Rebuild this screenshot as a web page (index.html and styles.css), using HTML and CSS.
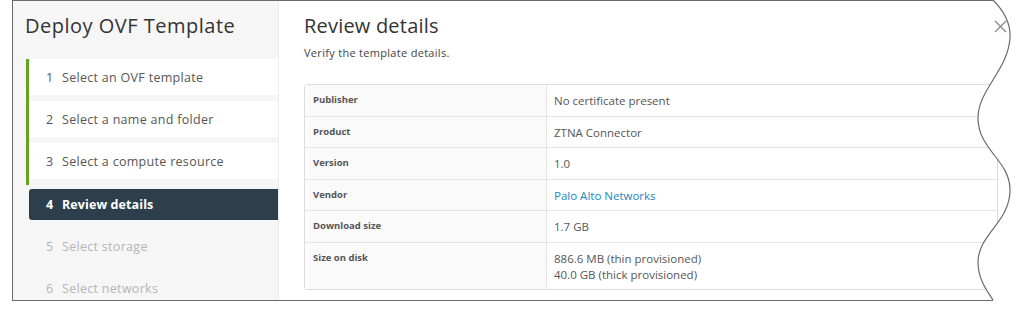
FILE: index.html
```html
<!DOCTYPE html>
<html lang="en">

<head>
    <meta charset="UTF-8">
    <title>Deploy OVF Template</title>
    <link rel="stylesheet" href="styles.css">
</head>

<body>
    <div class="page">
        <div class="wizard">
            <aside class="wizard-nav">
                <h2 class="wizard-title">Deploy OVF Template</h2>
                <ol class="steps">
                    <li class="step done"><span class="num">1</span>Select an OVF template</li>
                    <li class="step done"><span class="num">2</span>Select a name and folder</li>
                    <li class="step done"><span class="num">3</span>Select a compute resource</li>
                    <li class="step active"><span class="num">4</span>Review details</li>
                    <li class="step todo"><span class="num">5</span>Select storage</li>
                    <li class="step todo"><span class="num">6</span>Select networks</li>
                </ol>
            </aside>

            <main class="wizard-body">
                <h3 class="body-title">Review details</h3>
                <p class="body-sub">Verify the template details.</p>

                <table class="details">
                    <tr>
                        <th>Publisher</th>
                        <td>No certificate present</td>
                    </tr>
                    <tr>
                        <th>Product</th>
                        <td>ZTNA Connector</td>
                    </tr>
                    <tr>
                        <th>Version</th>
                        <td>1.0</td>
                    </tr>
                    <tr>
                        <th>Vendor</th>
                        <td><a href="#">Palo Alto Networks</a></td>
                    </tr>
                    <tr>
                        <th>Download size</th>
                        <td>1.7 GB</td>
                    </tr>
                    <tr>
                        <th>Size on disk</th>
                        <td>886.6 MB (thin provisioned)<br>40.0 GB (thick provisioned)</td>
                    </tr>
                </table>
            </main>

            <button class="close" type="button" aria-label="Close">
                <svg width="13" height="13" viewBox="0 0 13 13">
                    <path d="M1 1 L12 12 M12 1 L1 12" stroke="#8a8a8a" stroke-width="1.4" fill="none" />
                </svg>
            </button>
        </div>

        <!-- torn right edge of the screenshot -->
        <svg class="torn-edge" width="1024" height="325" viewBox="0 0 1024 325">
            <path d="M993,-2 L993,0 C1003,10 1011,22 1010,38 C1008,70 978,90 978,118 C978,150 1010,160 1010,190 C1010,222 978,235 978,262 C978,280 988,292 993,300 L993,325 L1024,325 L1024,-2 Z" fill="#fff" />
            <path d="M993,0 C1003,10 1011,22 1010,38 C1008,70 978,90 978,118 C978,150 1010,160 1010,190 C1010,222 978,235 978,262 C978,280 988,292 993,300" fill="none" stroke="#6b6b6b" stroke-width="1.2" />
        </svg>
    </div>
</body>

</html>
```

FILE: styles.css
```css
body {
    margin: 0;
    padding: 0;
    background-color: #fff;
    font-family: "Open Sans", "Liberation Sans", sans-serif;
    color: #565656;
}

.page {
    position: relative;
    width: 1024px;
    height: 325px;
    overflow: hidden;
}

.wizard {
    position: relative;
    display: flex;
    margin-left: 12px;
    width: 1000px;
    height: 299px;
    border: 1px solid #6b6b6b;
    border-right: none;
    overflow: hidden;
}

.wizard-nav {
    width: 265px;
    flex: none;
    background-color: #f6f6f6;
    border-right: 1px solid #ececec;
}

.wizard-title {
    margin: 12px 0 0 12px;
    font-size: 20px;
    font-weight: 400;
    line-height: 26px;
    color: #333;
    letter-spacing: 0.5px;
}

.steps {
    list-style: none;
    margin: 20px 0 0 13px;
    padding: 0;
}

.step {
    height: 36px;
    margin-bottom: 6px;
    padding-left: 20px;
    display: flex;
    align-items: center;
    font-size: 12.5px;
    letter-spacing: 0.3px;
    color: #565656;
    background-color: #fff;
}

.step .num {
    width: 16px;
}

.step.done {
    border-left: 3px solid #62a420;
    margin-bottom: 0;
    padding-bottom: 6px;
    background: linear-gradient(#fff 0, #fff 36px, #f6f6f6 36px);
    align-items: flex-start;
    line-height: 38px;
    padding-left: 17px;
}

.step.active {
    margin-left: 3px;
    height: 31px;
    margin-top: 4px;
    margin-bottom: 8px;
    padding-left: 17px;
    background-color: #2d3f4c;
    color: #fff;
    font-weight: 700;
    letter-spacing: 0.1px;
    border-radius: 3px 0 0 3px;
}

.step.todo {
    background-color: transparent;
    color: #b5b5b5;
    padding-left: 20px;
}

.wizard-body {
    flex: 1;
    padding: 0 15px 0 25px;
}

.body-title {
    margin: 12px 0 0;
    font-size: 20px;
    font-weight: 400;
    line-height: 26px;
    color: #333;
    letter-spacing: 0.2px;
}

.body-sub {
    margin: 7px 0 0;
    font-size: 11px;
    line-height: 14px;
    letter-spacing: 0.3px;
    color: #454545;
}

.details {
    margin-top: 24px;
    width: 100%;
    border-collapse: separate;
    border-spacing: 0;
    border: 1px solid #dcdcdc;
    border-radius: 3px;
}

.details th,
.details td {
    text-align: left;
    vertical-align: top;
    border-top: 1px solid #e4e4e4;
    line-height: 16px;
}

.details tr:first-child th,
.details tr:first-child td {
    border-top: none;
}

.details th {
    width: 225px;
    padding: 7px 8px 7.5px 8px;
    font-size: 9.5px;
    font-weight: 700;
    color: #555;
    background-color: #fafafa;
    border-right: 1px solid #e4e4e4;
}

.details td {
    padding: 8px 7px 6.5px 7px;
    font-size: 11.5px;
    color: #565656;
}

.details a {
    color: #1b87c5;
    text-decoration: none;
}

.close {
    position: absolute;
    top: 19px;
    left: 980px;
    padding: 0;
    border: none;
    background: none;
    width: 14px;
    height: 14px;
}

.torn-edge {
    position: absolute;
    top: 0;
    left: 0;
    pointer-events: none;
}
```
